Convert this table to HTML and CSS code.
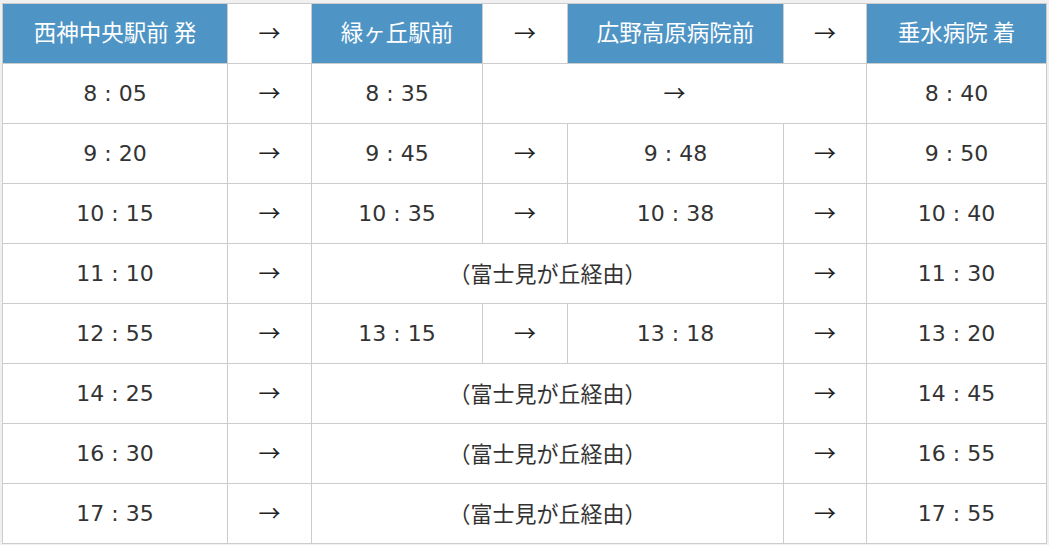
FILE: index.html
```html
<!DOCTYPE html>
<html lang="ja">
<head>
<meta charset="utf-8">
<link rel="stylesheet" href="styles.css">
</head>
<body>
<table class="timetable">
  <colgroup>
    <col class="c-time"><col class="c-arrow"><col class="c-mid"><col class="c-arrow2"><col class="c-hosp"><col class="c-arrow3"><col class="c-end">
  </colgroup>
  <thead>
    <tr>
      <th class="stop">西神中央駅前 発</th>
      <th class="arrow">→</th>
      <th class="stop">緑ヶ丘駅前</th>
      <th class="arrow">→</th>
      <th class="stop">広野高原病院前</th>
      <th class="arrow">→</th>
      <th class="stop">垂水病院 着</th>
    </tr>
  </thead>
  <tbody>
    <tr><td>8 : 05</td><td class="arrow">→</td><td>8 : 35</td><td class="arrow" colspan="3">→</td><td>8 : 40</td></tr>
    <tr><td>9 : 20</td><td class="arrow">→</td><td>9 : 45</td><td class="arrow">→</td><td>9 : 48</td><td class="arrow">→</td><td>9 : 50</td></tr>
    <tr><td>10 : 15</td><td class="arrow">→</td><td>10 : 35</td><td class="arrow">→</td><td>10 : 38</td><td class="arrow">→</td><td>10 : 40</td></tr>
    <tr><td>11 : 10</td><td class="arrow">→</td><td class="via" colspan="3">（富士見が丘経由）</td><td class="arrow">→</td><td>11 : 30</td></tr>
    <tr><td>12 : 55</td><td class="arrow">→</td><td>13 : 15</td><td class="arrow">→</td><td>13 : 18</td><td class="arrow">→</td><td>13 : 20</td></tr>
    <tr><td>14 : 25</td><td class="arrow">→</td><td class="via" colspan="3">（富士見が丘経由）</td><td class="arrow">→</td><td>14 : 45</td></tr>
    <tr><td>16 : 30</td><td class="arrow">→</td><td class="via" colspan="3">（富士見が丘経由）</td><td class="arrow">→</td><td>16 : 55</td></tr>
    <tr><td>17 : 35</td><td class="arrow">→</td><td class="via" colspan="3">（富士見が丘経由）</td><td class="arrow">→</td><td>17 : 55</td></tr>
  </tbody>
</table>
</body>
</html>
```
FILE: styles.css
```css
html, body {
  margin: 0;
  background: #f0f0f0;
}
body {
  padding: 3px 0 0 2px;
}
.timetable {
  border-collapse: collapse;
  table-layout: fixed;
  width: 1045px;
  background: #ffffff;
  font-family: "DejaVu Sans", "Noto Sans CJK JP", sans-serif;
  font-size: 22px;
  color: #333333;
}
.c-time { width: 225px; }
.c-arrow { width: 84px; }
.c-mid { width: 171px; }
.c-arrow2 { width: 85px; }
.c-hosp { width: 216px; }
.c-arrow3 { width: 83px; }
.c-end { width: 180px; }
.timetable th,
.timetable td {
  border: 1px solid #cccccc;
  height: 60px;
  padding: 0;
  text-align: center;
  vertical-align: middle;
  font-weight: normal;
  box-sizing: border-box;
}
.timetable th.stop {
  background: #4e94c5;
  color: #ffffff;
  font-family: "Noto Sans CJK JP", sans-serif;
  font-size: 22.5px;
  padding-bottom: 5px;
}
.timetable .arrow {
  font-family: "Noto Sans CJK JP", sans-serif;
  color: #222222;
  padding-bottom: 6px;
}
.timetable td.via {
  font-family: "Noto Sans CJK JP", sans-serif;
  padding-bottom: 4px;
}
```
